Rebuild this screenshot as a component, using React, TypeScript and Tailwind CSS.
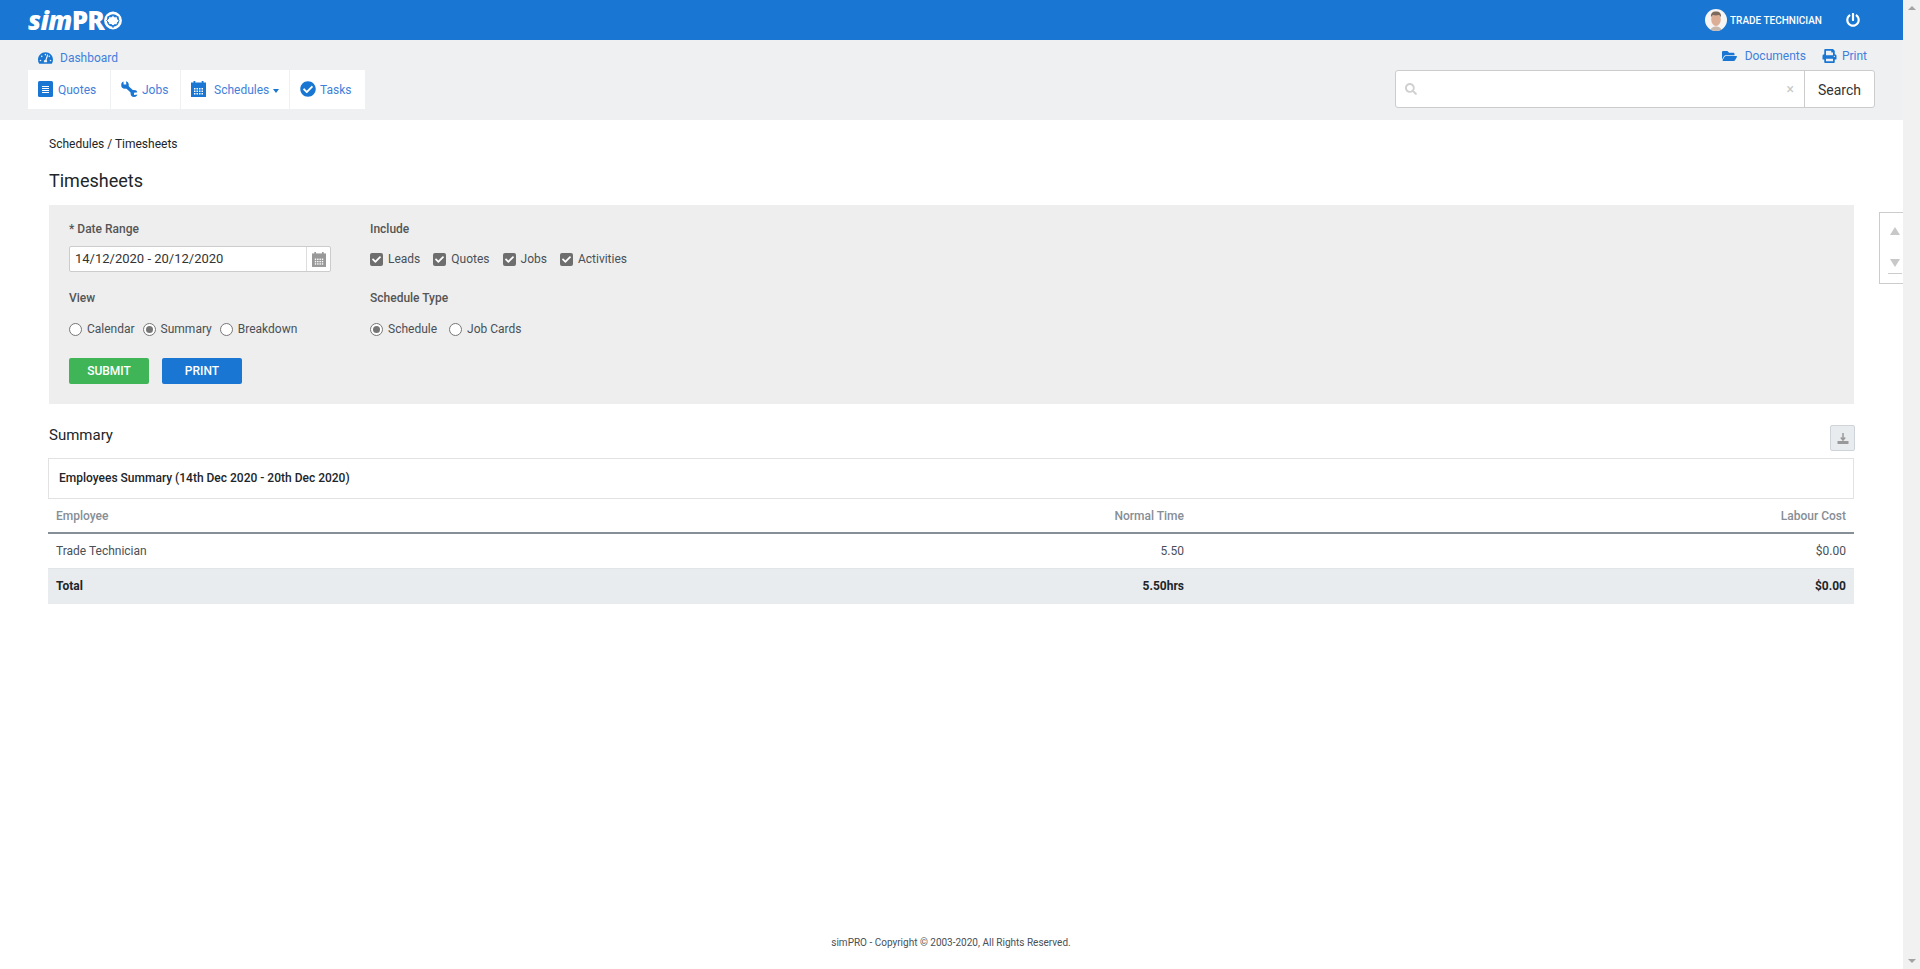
import { FaTachometerAlt, FaCheckCircle, FaFolderOpen, FaPrint, FaPowerOff, FaSearch, FaCheck } from "react-icons/fa";

function Logo() {
  return (
    <div className="flex items-center h-[40px] text-white leading-none text-[26px]" style={{ fontFamily: '"Open Sans", sans-serif' }}>
      <span className="italic font-extrabold tracking-[-0.6px]">sim</span>
      <span className="font-extrabold tracking-[-1px]">PR</span>
      <svg viewBox="0 0 20 20" className="w-[18px] h-[19px]">
        <circle cx="10" cy="10" r="8.400" fill="none" stroke="#fff" strokeWidth="3" />
        <path d="M10 4.200l1.700 1.900 2.900-.5.400 2.900 2 1.700-2 1.900-.6 2.700-2.800-.2L10 16l-1.800-1.600-2.700.2-.7-2.700L2.800 10 4.800 8.200l.6-2.600 2.800.5z" fill="#fff" stroke="#1976d2" strokeWidth="1" />
        <circle cx="4.600" cy="6.200" r="1" fill="#1976d2" />
        <circle cx="15.400" cy="6.200" r="1" fill="#1976d2" />
        <circle cx="10" cy="17" r="1" fill="#1976d2" />
      </svg>
    </div>
  );
}

function Avatar() {
  return (
    <svg viewBox="0 0 22 22" className="w-[22px] h-[22px] rounded-full">
      <rect width="22" height="22" fill="#f6f5f3" />
      <ellipse cx="11" cy="10.500" rx="4.800" ry="6.500" fill="#dcae96" />
      <path d="M6 8.500C5.500 3.500 8 2.500 11 2.500s5.500 1 5 6c-.5-1.500-1.500-2.500-2.500-2.500-2 .5-3.500.5-5 0-1 0-2 1-2.500 2.500z" fill="#7d6a5e" />
      <path d="M5 22c1-3.500 3.500-4.500 6-4.500s5 1 6 4.500z" fill="#c9b8ac" />
    </svg>
  );
}

function QuoteIcon() {
  return (
    <svg viewBox="0 0 15 16" className="w-[15px] h-[16px] mb-[2px]">
      <rect width="15" height="16" rx="1.500" fill="#1976d2" />
      <path d="M4 5.500h7M4 7.500h7M4 9.500h7M4 11.500h7" stroke="#fff" strokeWidth="1" />
    </svg>
  );
}

function WrenchIcon() {
  return (
    <svg viewBox="0 0 17 16" className="w-[17px] h-[16px] mb-[2px]">
      <path d="M4.500 4.500L12.500 12" stroke="#1976d2" strokeWidth="3.200" />
      <circle cx="4" cy="4" r="3.800" fill="#1976d2" />
      <circle cx="13" cy="12.500" r="3.400" fill="#1976d2" />
      <path d="M4 3.500L3.600 -1" stroke="#fff" strokeWidth="2.600" />
      <path d="M13 12.800L18 12.300" stroke="#fff" strokeWidth="2.200" />
    </svg>
  );
}

function CalendarIcon({ className, color }: { className: string; color: string }) {
  const cells: React.ReactNode[] = [];
  for (const y of [7, 9.5, 12]) {
    for (const x of [3, 5.5, 8, 10.5]) {
      cells.push(<rect key={`${x}-${y}`} x={x} y={y} width="1.500" height="1.500" fill="#fff" />);
    }
  }
  return (
    <svg viewBox="0 0 15 16" className={className}>
      <rect y="1.500" width="15" height="14.500" fill={color} />
      <rect x="2.500" width="1.800" height="3" fill={color} />
      <rect x="10.700" width="1.800" height="3" fill={color} />
      {cells}
    </svg>
  );
}

function Tab({ icon, label, width, gap, caret }: { icon: React.ReactNode; label: string; width: string; gap: string; caret?: boolean }) {
  return (
    <div className={`flex items-center bg-white h-[39px] pl-[10px] ${width} ${gap}`}>
      {icon}
      <span className="flex items-center">
        {label}
        {caret && <span className="ml-[4px] mt-[3px] w-0 h-0 border-x-[3px] border-x-transparent border-t-[4px] border-t-[#1976d2]" />}
      </span>
    </div>
  );
}

function Radio({ checked, label }: { checked?: boolean; label: string }) {
  return (
    <label className="flex items-center gap-[5px]">
      <span className="w-[13px] h-[13px] rounded-full bg-white border border-[#767676] flex items-center justify-center">
        {checked && <span className="w-[7px] h-[7px] rounded-full bg-[#767676]" />}
      </span>
      <span>{label}</span>
    </label>
  );
}

function Check({ label }: { label: string }) {
  return (
    <label className="flex items-center gap-[5px]">
      <span className="w-[13px] h-[13px] rounded-[2px] bg-[#6e6e6e] flex items-center justify-center text-white">
        <FaCheck className="w-[9px] h-[9px]" />
      </span>
      <span>{label}</span>
    </label>
  );
}

export default function App() {
  return (
    <div className="flex h-[969px] w-full overflow-hidden bg-white text-[12px] text-[#333]" style={{ fontFamily: 'Roboto, sans-serif' }}>
      <div className="flex-1 min-w-0 flex flex-col relative">
        <header className="h-[40px] bg-[#1976d2] flex items-center justify-between pl-[28px] pr-[43px]">
          <Logo />
          <div className="flex items-center text-white">
            <Avatar />
            <span className="ml-[3px] text-[10px] font-medium uppercase w-[91px] whitespace-nowrap">Trade Technician</span>
            <FaPowerOff className="ml-[25px] w-[14px] h-[14px]" />
          </div>
        </header>

        <div className="h-[80px] bg-[#eff0f2] flex justify-between pl-[28px] pr-[28px] text-[#3f7fdc]">
          <div className="flex flex-col">
            <div className="h-[30px] flex items-center pl-[10px] gap-[7px] pt-[6px]">
              <FaTachometerAlt className="w-[15px] h-[14px] text-[#1976d2]" />
              <span>Dashboard</span>
            </div>
            <nav className="flex gap-[1px]">
              <Tab icon={<QuoteIcon />} label="Quotes" width="w-[82px]" gap="gap-[5px]" />
              <Tab icon={<WrenchIcon />} label="Jobs" width="w-[69px]" gap="gap-[4px]" />
              <Tab icon={<CalendarIcon className="w-[15px] h-[16px] mb-[2px]" color="#1976d2" />} label="Schedules" width="w-[108px]" gap="gap-[8px]" caret />
              <Tab icon={<FaCheckCircle className="w-[16px] h-[16px] text-[#1976d2] mb-[1px]" />} label="Tasks" width="w-[75px]" gap="gap-[4px]" />
            </nav>
          </div>
          <div className="flex flex-col items-end">
            <div className="h-[30px] flex items-center pt-[2px] pr-[8px]">
              <FaFolderOpen className="w-[15px] h-[14px] text-[#1976d2]" />
              <span className="ml-[8px]">Documents</span>
              <FaPrint className="ml-[16px] w-[15px] h-[14px] text-[#1976d2]" />
              <span className="ml-[5px]">Print</span>
            </div>
            <div className="w-[480px] h-[38px] bg-white border border-[#ccc] rounded-[3px] flex items-center text-[#333]">
              <FaSearch className="ml-[9px] w-[12px] h-[12px] text-[#d0d0d0]" />
              <div className="flex-1" />
              <span className="text-[#c8c8c8] text-[14px] mr-[10px] leading-none">×</span>
              <div className="w-[70px] h-full border-l border-[#ccc] flex items-center justify-center text-[14px] pt-[2px]">Search</div>
            </div>
          </div>
        </div>

        <main className="flex-1 pl-[48px] pr-[49px] flex flex-col">
          <div className="mt-[17px] pl-[1px] h-[14px] leading-[14px] text-[#212529]">Schedules / Timesheets</div>
          <h1 className="mt-[18px] pl-[1px] text-[18px] leading-[24px] text-[#212529]">Timesheets</h1>

          <section className="mt-[12px] ml-[1px] h-[199px] bg-[#eeeeee] px-[20px] pt-[16px] flex gap-[39px]">
            <div className="w-[262px] flex flex-col">
              <div className="h-[16px] leading-[16px] font-medium text-[#555]">* Date Range</div>
              <div className="mt-[9px] w-[262px] h-[26px] bg-white border border-[#ccc] rounded-[2px] flex items-center pl-[5px] text-[13px] text-[#333]">
                <span className="flex-1">14/12/2020 - 20/12/2020</span>
                <div className="w-[24px] h-full border-l border-[#ddd] flex items-center justify-center">
                  <CalendarIcon className="w-[14px] h-[15px]" color="#999" />
                </div>
              </div>
              <div className="mt-[18px] h-[16px] leading-[16px] font-medium text-[#555]">View</div>
              <div className="mt-[15px] h-[16px] flex items-center gap-[8px] text-[#495057]">
                <Radio label="Calendar" />
                <Radio checked label="Summary" />
                <Radio label="Breakdown" />
              </div>
              <div className="mt-[21px] flex gap-[13px] font-medium text-white">
                <button className="w-[80px] h-[26px] rounded-[2px] bg-[#3fb558]">SUBMIT</button>
                <button className="w-[80px] h-[26px] rounded-[2px] bg-[#1976d2]">PRINT</button>
              </div>
            </div>
            <div className="flex flex-col">
              <div className="h-[16px] leading-[16px] font-medium text-[#555]">Include</div>
              <div className="mt-[9px] h-[26px] flex items-center gap-[13px] text-[#495057]">
                <Check label="Leads" />
                <Check label="Quotes" />
                <Check label="Jobs" />
                <Check label="Activities" />
              </div>
              <div className="mt-[18px] h-[16px] leading-[16px] font-medium text-[#555]">Schedule Type</div>
              <div className="mt-[15px] h-[16px] flex items-center gap-[12px] text-[#495057]">
                <Radio checked label="Schedule" />
                <Radio label="Job Cards" />
              </div>
            </div>
          </section>

          <div className="mt-[21px] h-[26px] flex items-center justify-between">
            <h2 className="pl-[1px] text-[15px] text-[#212529] pb-[6px]">Summary</h2>
            <button className="w-[25px] h-[26px] -mr-[1px] bg-[#e9ecef] border border-[#ced4da] rounded-[2px] flex items-center justify-center">
              <svg viewBox="0 0 12 13" className="w-[12px] h-[13px]">
                <path d="M6 1v6M3.800 5.500L6 8l2.200-2.500" stroke="#999" strokeWidth="1.500" fill="none" />
                <rect x="0.500" y="9" width="11" height="3" fill="#999" />
              </svg>
            </button>
          </div>
          <div className="mt-[7px] h-[41px] border border-[#e2e2e2] flex items-center pl-[10px] pb-[2px] font-medium text-[#212529]">
            Employees Summary (14th Dec 2020 - 20th Dec 2020)
          </div>
          <table className="w-full border-collapse">
            <tbody>
              <tr className="h-[34px] border-b-2 border-[#868e96] text-[#868e96] font-medium">
                <td className="px-[8px]">Employee</td>
                <td className="px-[8px] w-[620px] text-right">Normal Time</td>
                <td className="px-[8px] w-[662px] text-right">Labour Cost</td>
              </tr>
              <tr className="h-[35px] border-b border-[#e2e5e8] text-[#495057]">
                <td className="px-[8px]">Trade Technician</td>
                <td className="px-[8px] text-right">5.50</td>
                <td className="px-[8px] text-right">$0.00</td>
              </tr>
              <tr className="h-[36px] bg-[#e9ecef] text-[#212529] font-bold">
                <td className="px-[8px]">Total</td>
                <td className="px-[8px] text-right">5.50hrs</td>
                <td className="px-[8px] text-right">$0.00</td>
              </tr>
            </tbody>
          </table>
          <div className="flex-1" />
          <footer className="h-[38px] text-center text-[10px] text-[#495057] pt-[4px]">simPRO - Copyright © 2003-2020, All Rights Reserved.</footer>
        </main>

        <div className="absolute right-0 top-[212px] w-[24px] h-[72px] bg-white border border-r-0 border-[#ccc] flex flex-col items-center pt-[14px] pl-[6px]">
          <span className="w-0 h-0 border-x-[5px] border-x-transparent border-b-[8px] border-b-[#c8c8c8]" />
          <span className="mt-[24px] w-0 h-0 border-x-[5px] border-x-transparent border-t-[8px] border-t-[#c8c8c8]" />
          <span className="mt-[6px] w-[14px] h-[1px] bg-[#ccc]" />
        </div>
      </div>
      <aside className="w-[17px] bg-[#f1f1f1] flex flex-col items-center justify-between py-[6px]">
        <span className="w-0 h-0 border-x-[4px] border-x-transparent border-b-[4px] border-b-[#a3a3a3]" />
        <span className="w-0 h-0 border-x-[4px] border-x-transparent border-t-[4px] border-t-[#a3a3a3]" />
      </aside>
    </div>
  );
}
